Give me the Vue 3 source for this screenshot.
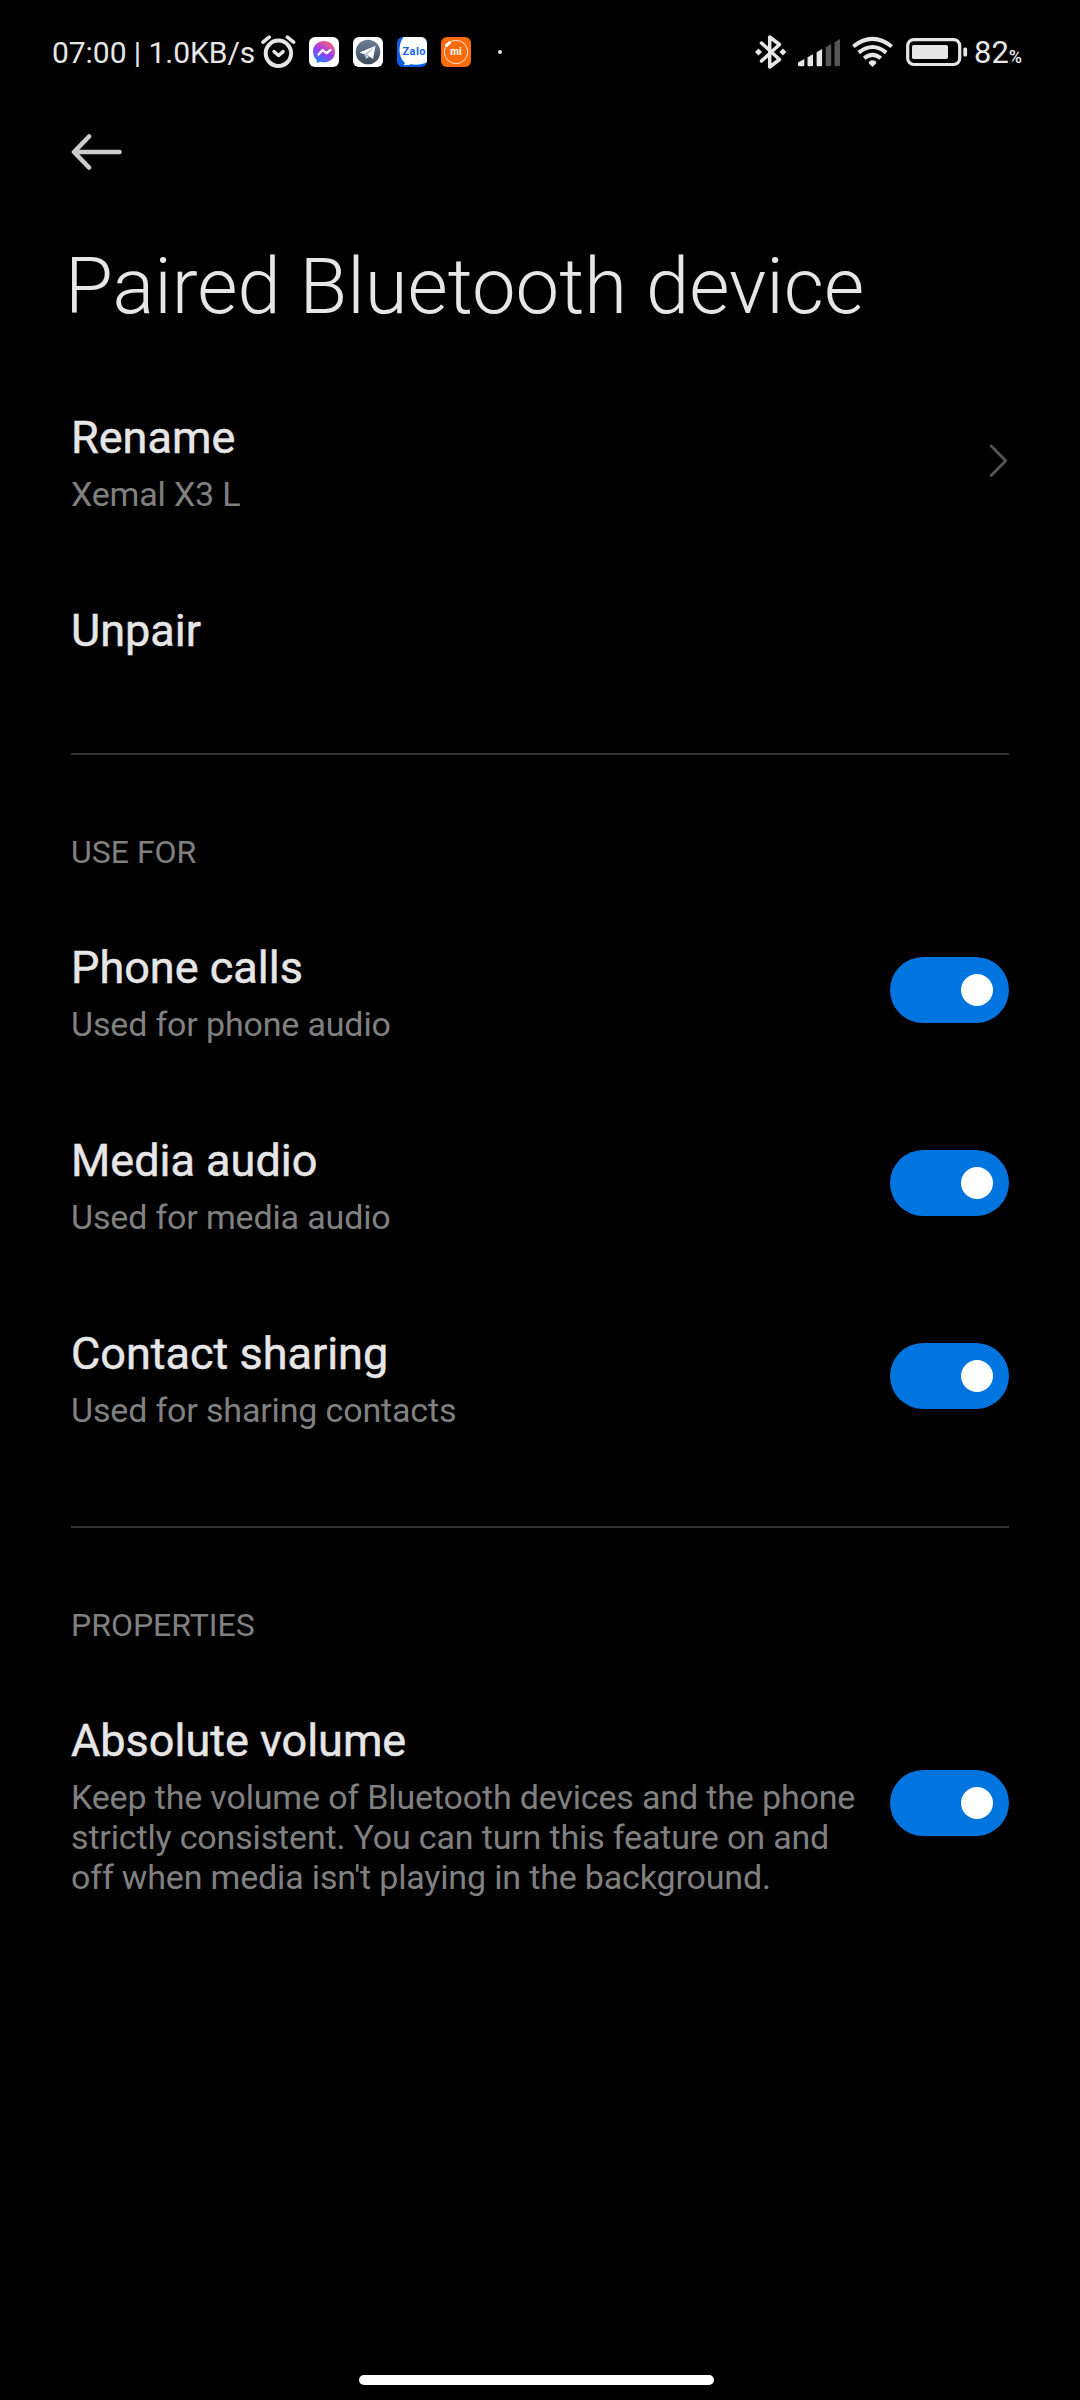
<template>
  <div class="screen">
    <header class="status-bar">
      <div class="status-left">
        <span class="clock">07:00 | 1.0KB/s</span>
        <svg class="alarm" width="36" height="36" viewBox="0 0 36 36" fill="none" stroke="#e6e6e6" stroke-linecap="round">
          <circle cx="17.4" cy="19.3" r="12.7" stroke-width="4" />
          <path d="M2 8.2 8.2 3.2M32.6 8.2 26.4 3.2" stroke-width="3.6" />
          <path d="M13 17.6l4.5 4 4.6-4" stroke-width="3.4" stroke-linejoin="round" />
        </svg>
        <svg class="app" viewBox="0 0 30 30">
          <defs>
            <linearGradient id="messenger" x1="0.2" y1="1" x2="0.75" y2="0">
              <stop offset="0" stop-color="#1689ff" />
              <stop offset="0.5" stop-color="#9b3cf5" />
              <stop offset="1" stop-color="#ff6470" />
            </linearGradient>
          </defs>
          <rect width="30" height="30" rx="6" fill="#fff" />
          <path d="M15 4C8.600 4 4 8.500 4 14.700c0 3.300 1.400 6.100 3.700 8l.2 3.300 3.200-1.300c1.200.4 2.500.6 3.900.6 6.400 0 11-4.500 11-10.600S21.400 4 15 4z" fill="url(#messenger)" />
          <path d="M9.500 17.500l4-4.500 4 3.200 4-3.200" fill="none" stroke="#fff" stroke-width="2.300" stroke-linejoin="round" stroke-linecap="round" />
        </svg>
        <svg class="app" viewBox="0 0 30 30">
          <defs>
            <linearGradient id="telegram" x1="0" y1="0" x2="0" y2="1">
              <stop offset="0" stop-color="#6d8194" />
              <stop offset="1" stop-color="#3d4b5b" />
            </linearGradient>
          </defs>
          <rect width="30" height="30" rx="6" fill="#fff" />
          <circle cx="15" cy="15" r="12.300" fill="url(#telegram)" />
          <path d="M6.500 15.600 22.500 8.800 20 22l-5-3.500z" fill="#fff" />
          <path d="M11.300 17 22.300 9 13.600 18.300 13 22z" fill="#b9c6d2" />
          <path d="M13 22l.7-3.800 2.300 1.600z" fill="#e4eaf0" />
        </svg>
        <svg class="app" viewBox="0 0 30 30">
          <rect width="30" height="30" rx="6" fill="#0b5fe8" />
          <path d="M6.500 0H24a6 6 0 0 1 6 6v19c-4 2.500-10 3.200-16 2.300-2.500.8-5 1.100-7.600.8 1-.7 1.500-1.600 1.300-2.500C1.500 21 .5 8 6.500 0z" fill="#fff" />
          <text x="5.500" y="17.800" class="zalo" textLength="23">Zalo</text>
        </svg>
        <svg class="app" viewBox="0 0 30 30">
          <rect width="30" height="30" rx="6" fill="#ff6a0a" />
          <circle cx="15" cy="15" r="11.700" fill="none" stroke="#ffe6d2" stroke-width="1" />
          <path d="M4.200 9.600 9.600 4.200" stroke="#ff6a0a" stroke-width="5" />
          <path d="M5.400 8.600 8.600 5.600" stroke="#fff" stroke-width="3" stroke-linecap="round" />
          <text x="15" y="18" text-anchor="middle" class="mi">mi</text>
        </svg>
        <span class="more-dot"></span>
      </div>
      <div class="status-right">
        <svg class="bluetooth" width="32" height="36" viewBox="0 0 32 36" fill="none" stroke="#e6e6e6">
          <path d="M6.500 9 24.500 25.500 14.700 33V3l9.800 7.500L6.500 27" stroke-width="3.500" stroke-linejoin="round" stroke-linecap="round" />
          <path d="M0 18l3.500-3.500L7 18l-3.500 3.500zM24.400 18l3.500-3.500 3.500 3.500-3.500 3.500z" fill="#e6e6e6" stroke="none" />
        </svg>
        <svg class="signal" width="43" height="36" viewBox="0 0 43 36" fill="#e6e6e6">
          <path d="M0 31v-2.500L6.300 25v6q0 1.200-1.200 1.200H1.200Q0 32.200 0 31z" />
          <path d="M9.500 23.300 15 20.200V31q0 1.200-1.200 1.200h-3.100q-1.200 0-1.200-1.200z" />
          <path d="M18.600 18.200 24.100 15v16q0 1.200-1.200 1.200h-3.100q-1.200 0-1.200-1.200z" />
          <path d="M27.700 13.200 33.200 10v21q0 1.200-1.200 1.200h-3.100q-1.200 0-1.200-1.200z" fill="#565656" />
          <path d="M36.500 8.200 42 5v26q0 1.200-1.200 1.200h-3.100q-1.200 0-1.200-1.200z" fill="#565656" />
        </svg>
        <svg class="wifi" width="42" height="36" viewBox="0 0 42 36" fill="none" stroke="#e6e6e6" stroke-width="4.100">
          <path d="M1.300 12.500Q20.500-2.600 39.700 12.500" />
          <path d="M6.800 18.600Q20.500 7.400 34.200 18.600" />
          <path d="M12.200 24.300Q20.500 17.300 28.800 24.300" />
          <path d="M20.500 33l-3.800-3.700q0-3 3.800-3t3.800 3z" fill="#e6e6e6" stroke="none" />
        </svg>
        <svg class="battery" width="62" height="36" viewBox="0 0 62 36">
          <rect x="1.700" y="5.700" width="52" height="24.800" rx="6" fill="none" stroke="#e6e6e6" stroke-width="3.200" />
          <rect x="6" y="11" width="36" height="14" rx="1.800" fill="#e6e6e6" />
          <rect x="57.300" y="13.500" width="3.800" height="9" rx="1.500" fill="#e6e6e6" />
        </svg>
        <span class="level">82<small>%</small></span>
      </div>
    </header>

    <nav class="nav">
      <svg width="54" height="40" viewBox="0 0 54 40" fill="none" stroke="#cccccc" stroke-width="4.600" stroke-linecap="round" stroke-linejoin="round">
        <path d="M18 4.500 3 20 18 35.500M4 20H48.500" />
      </svg>
    </nav>

    <h1 class="title">Paired Bluetooth device</h1>

    <section class="group">
      <div class="row">
        <div class="text">
          <div class="name">Rename</div>
          <div class="summary">Xemal X3 L</div>
        </div>
        <svg class="chevron" width="20" height="36" viewBox="0 0 20 36" fill="none" stroke="#565656" stroke-width="2.800" stroke-linecap="round" stroke-linejoin="round">
          <path d="M2.200 4 16.700 18.700 2.200 33.400" />
        </svg>
      </div>
      <div class="row">
        <div class="text">
          <div class="name">Unpair</div>
        </div>
      </div>
    </section>

    <section v-for="group in groups" :key="group.label" class="group divided">
      <h2 class="label">{{ group.label }}</h2>
      <div v-for="item in group.items" :key="item.name" class="row">
        <div class="text">
          <div class="name">{{ item.name }}</div>
          <div class="summary">{{ item.summary }}</div>
        </div>
        <button
          class="toggle"
          :class="{ on: item.enabled }"
          role="switch"
          :aria-checked="item.enabled"
          @click="item.enabled = !item.enabled"
        >
          <span class="knob"></span>
        </button>
      </div>
    </section>

    <div class="home-bar"></div>
  </div>
</template>

<script setup>
import { ref } from 'vue';

const groups = ref([
  {
    label: 'USE FOR',
    items: [
      { name: 'Phone calls', summary: 'Used for phone audio', enabled: true },
      { name: 'Media audio', summary: 'Used for media audio', enabled: true },
      { name: 'Contact sharing', summary: 'Used for sharing contacts', enabled: true },
    ],
  },
  {
    label: 'PROPERTIES',
    items: [
      {
        name: 'Absolute volume',
        summary:
          "Keep the volume of Bluetooth devices and the phone strictly consistent. You can turn this feature on and off when media isn't playing in the background.",
        enabled: true,
      },
    ],
  },
]);
</script>

<style>
body {
  margin: 0;
  background: #000;
}
</style>

<style scoped>
.screen {
  display: flex;
  flex-direction: column;
  box-sizing: border-box;
  width: 1080px;
  height: 2400px;
  padding-bottom: 15px;
  background: #000;
  color: #e6e6e6;
  font-family: Roboto, sans-serif;
}

.status-bar {
  display: flex;
  justify-content: space-between;
  height: 104px;
  padding: 0 58px 0 52px;
}

.status-left,
.status-right {
  display: flex;
  align-items: center;
}

.clock {
  width: 209px;
  font-size: 30px;
  letter-spacing: -0.05px;
  white-space: nowrap;
}

.app {
  width: 30px;
  height: 30px;
  margin-right: 14px;
}

.alarm {
  margin-right: 12px;
}

.zalo {
  fill: #1268e8;
  font-size: 11px;
  font-weight: 700;
}

.mi {
  fill: #fff;
  font-size: 10px;
  font-weight: 700;
}

.more-dot {
  width: 4px;
  height: 4px;
  margin-left: 13px;
  border-radius: 50%;
  background: #e6e6e6;
}

.bluetooth {
  margin-right: 11px;
}

.signal {
  margin-right: 11px;
}

.wifi {
  margin-right: 12px;
}

.battery {
  margin-right: 6px;
}

.level {
  width: 48px;
  font-size: 31px;
  white-space: nowrap;
}

.level small {
  font-size: 18px;
  font-weight: 500;
}

.nav {
  display: flex;
  align-items: center;
  height: 96px;
  padding-left: 71px;
}

.title {
  margin: 39px 0 0;
  padding-left: 65px;
  font-size: 77.8px;
  font-weight: 300;
  line-height: 96px;
}

.group {
  margin: 28px 71px 0;
}

.row {
  display: flex;
  align-items: center;
  justify-content: space-between;
  padding: 48px 0 42px;
}

.text {
  width: 792px;
}

.name {
  font-size: 45px;
  line-height: 53px;
  -webkit-text-stroke: 0.5px currentColor;
}

.summary {
  margin-top: 10px;
  color: #808080;
  font-size: 34px;
  letter-spacing: -0.16px;
  line-height: 40px;
}

.divided {
  margin-top: 54px;
  border-top: 2px solid #333;
}

.label {
  margin: 0;
  padding: 78px 0 22px;
  color: #808080;
  font-size: 32px;
  font-weight: 400;
  line-height: 38px;
}

.chevron {
  margin-bottom: 6px;
}

.toggle {
  display: flex;
  align-items: center;
  width: 119px;
  height: 66px;
  margin-bottom: 6px;
  padding: 0 16px;
  border: 0;
  border-radius: 33px;
  background: #333;
}

.toggle.on {
  justify-content: flex-end;
  background: #0074df;
}

.knob {
  width: 32px;
  height: 32px;
  border-radius: 50%;
  background: #fff;
}

.home-bar {
  width: 355px;
  height: 10px;
  margin: auto 366px 0 359px;
  border-radius: 5px;
  background: #fff;
}
</style>
